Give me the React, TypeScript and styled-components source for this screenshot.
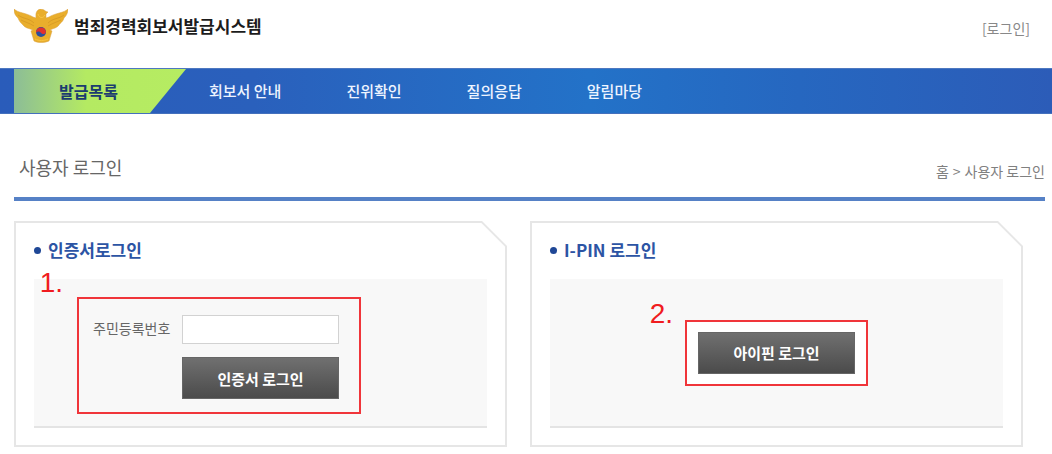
import React from "react";
import styled, { createGlobalStyle } from "styled-components";

const GlobalStyle = createGlobalStyle`
  * { box-sizing: border-box; }
  body {
    margin: 0;
    background: #fff;
    font-family: "Noto Sans CJK KR", "Noto Sans", sans-serif;
    color: #666;
  }
  a { color: inherit; text-decoration: none; }
  h1, h2, ul, ol { margin: 0; padding: 0; list-style: none; }
`;

const Header = styled.header`
  display: flex;
  align-items: center;
  justify-content: space-between;
  height: 68px;
  padding: 0 22px 12px 14px;
`;

const Brand = styled.a`
  display: flex;
  align-items: center;
  gap: 6px;
  padding-bottom: 4px;
  font-size: 17px;
  font-weight: 700;
  line-height: 24px;
  color: #1c1c1c;
`;

const UtilityLink = styled.a`
  font-size: 14px;
  line-height: 20px;
  color: #888;
`;

const Nav = styled.nav`
  padding-left: 14px;
  background: linear-gradient(90deg, #2a5cba 0%, #2a60bc 24%, #2372c8 56%, #2667c0 76%, #2c5cb8 100%);
  border-top: 1px solid #4d78c0;
  border-bottom: 1px solid #4470bc;
`;

const NavList = styled.ul`
  display: flex;
  align-items: center;
  gap: 65px;
`;

const NavItem = styled.li`
  font-size: 15px;
  font-weight: 500;
  line-height: 44px;
  color: #eef4ff;
`;

const ActiveItem = styled(NavItem)`
  width: 172px;
  margin-right: -42px;
  padding-left: 45px;
  font-size: 16px;
  font-weight: 700;
  color: #1b3c70;
  background: linear-gradient(90deg, #8cbd97 0, #b4ea62 72px, #b6ec62 100%);
  clip-path: polygon(0 0, 100% 0, calc(100% - 36px) 100%, 0 100%);
`;

const Main = styled.main`
  padding: 0 7px 8px 14px;
`;

const TitleBar = styled.div`
  display: flex;
  align-items: center;
  justify-content: space-between;
  height: 87px;
  padding: 22px 0 0 5px;
  border-bottom: 4px solid #5681c6;
`;

const PageTitle = styled.h1`
  font-size: 18px;
  font-weight: 400;
  line-height: 24px;
  color: #666;
`;

const Breadcrumb = styled.ol`
  display: flex;
  gap: 4px;
  padding-top: 8px;
  font-size: 14px;
  line-height: 20px;
  color: #808080;

  li + li::before {
    content: ">";
    margin-right: 4px;
  }
`;

const Cards = styled.div`
  display: grid;
  grid-template-columns: 1fr 1fr;
  gap: 23px;
  padding: 20px 22px 0 0;
`;

const Card = styled.section`
  padding: 15px 18px 17px;
  border: 2px solid #e6e6e6;
  background: linear-gradient(225deg, #e6e6e6 19px, #fff 20px) border-box;
  clip-path: polygon(0 0, calc(100% - 25px) 0, 100% 25px, 100% 100%, 0 100%);
`;

const CardTitle = styled.h2`
  display: flex;
  align-items: center;
  gap: 7px;
  font-size: 17px;
  font-weight: 700;
  line-height: 24px;
  color: #2c54a4;

  &::before {
    content: "";
    width: 7px;
    height: 7px;
    border-radius: 50%;
    background: #1f4796;
  }
`;

const Panel = styled.div<{ $center?: boolean }>`
  display: flex;
  align-items: center;
  justify-content: ${(p) => (p.$center ? "center" : "flex-start")};
  height: 149px;
  margin-top: 17px;
  padding: ${(p) => (p.$center ? "0" : "6px 0 0 43px")};
  background: #f8f8f8;
  border-bottom: 2px solid #e4e4e4;
`;

const Marked = styled.div<{ $filled?: boolean }>`
  position: relative;
  padding: ${(p) => (p.$filled ? "10px 11px" : "16px 20px 13px 14px")};
  border: 2px solid #f0353a;
  background: ${(p) => (p.$filled ? "#fff" : "transparent")};
`;

const Step = styled.span<{ $low?: boolean }>`
  position: absolute;
  right: 100%;
  bottom: 100%;
  margin: ${(p) => (p.$low ? "0 14px -8px 0" : "0 16px 0 0")};
  font-family: "Liberation Sans", sans-serif;
  font-size: 28px;
  line-height: 32px;
  color: #f01c20;
`;

const LoginForm = styled.form`
  display: grid;
  grid-template-columns: 81px 157px;
  align-items: center;
  gap: 13px 8px;
`;

const Label = styled.label`
  padding-bottom: 4px;
  font-size: 14px;
  line-height: 20px;
  white-space: nowrap;
  color: #666;
`;

const TextInput = styled.input`
  width: 100%;
  height: 29px;
  padding: 0 8px;
  border: 1px solid #d2d2d2;
  border-radius: 0;
  background: #fff;
  font: inherit;
  font-size: 14px;
`;

const DarkButton = styled.button`
  grid-column: 2;
  width: 157px;
  height: 42px;
  padding: 0;
  border: 1px solid #666;
  background: linear-gradient(#707070, #4b4b4b);
  font: inherit;
  font-size: 15px;
  font-weight: 700;
  color: #fff;
`;

function Emblem() {
  return (
    <svg width="54" height="34" viewBox="0 0 54 34" aria-hidden="true">
      <path
        d="M0 0 C4 4 13 4 19 8 L22 9 C22 6 21 2 26 0 C31 0 31 3 34 3 L32 5 L32 9 L35 8 C41 4 50 4 54 0 C54 5 51 8 50 9 C49 13 46 14 45 16 C43 19 40 19 36 21 L38 22 L35 32 C30 34 24 34 20 32 L17 22 L19 21 C14 19 11 19 9 16 C7 14 5 12 4 9 C2 7 0 5 0 0Z"
        fill="#e9ae2c"
        stroke="#d9a043"
        strokeWidth="0.5"
      />
      <path
        d="M4 6 C9 10 15 9 20 14 M7 11 C11 13 15 14 20 17 M50 6 C45 10 39 9 34 14 M47 11 C43 13 39 14 34 17"
        fill="none"
        stroke="#d99d26"
        strokeWidth="1"
      />
      <path d="M24 5 C25 9 29 10 31 6 M21 30 C25 32 30 32 34 30" fill="none" stroke="#f8c544" strokeWidth="1" />
      <circle cx="27" cy="23" r="5" fill="#2c4f9e" />
      <path d="M22 24 A5 5 0 0 1 32 23 C31 26 28 25 27 24 C26 22 23 22 22 24Z" fill="#e2302e" />
    </svg>
  );
}

const menu = ["회보서 안내", "진위확인", "질의응답", "알림마당"];

export default function App() {
  return (
    <>
      <GlobalStyle />
      <Header>
        <Brand href="#">
          <Emblem />
          범죄경력회보서발급시스템
        </Brand>
        <UtilityLink href="#login">[로그인]</UtilityLink>
      </Header>
      <Nav>
        <NavList>
          <ActiveItem>
            <a href="#list">발급목록</a>
          </ActiveItem>
          {menu.map((name) => (
            <NavItem key={name}>
              <a href="#menu">{name}</a>
            </NavItem>
          ))}
        </NavList>
      </Nav>
      <Main>
        <TitleBar>
          <PageTitle>사용자 로그인</PageTitle>
          <Breadcrumb>
            <li>홈</li>
            <li>사용자 로그인</li>
          </Breadcrumb>
        </TitleBar>
        <Cards>
          <Card>
            <CardTitle>인증서로그인</CardTitle>
            <Panel>
              <Marked>
                <Step>1.</Step>
                <LoginForm>
                  <Label htmlFor="resident-number">주민등록번호</Label>
                  <TextInput id="resident-number" type="text" />
                  <DarkButton type="button">인증서 로그인</DarkButton>
                </LoginForm>
              </Marked>
            </Panel>
          </Card>
          <Card>
            <CardTitle>I-PIN 로그인</CardTitle>
            <Panel $center>
              <Marked $filled>
                <Step $low>2.</Step>
                <DarkButton type="button">아이핀 로그인</DarkButton>
              </Marked>
            </Panel>
          </Card>
        </Cards>
      </Main>
    </>
  );
}
